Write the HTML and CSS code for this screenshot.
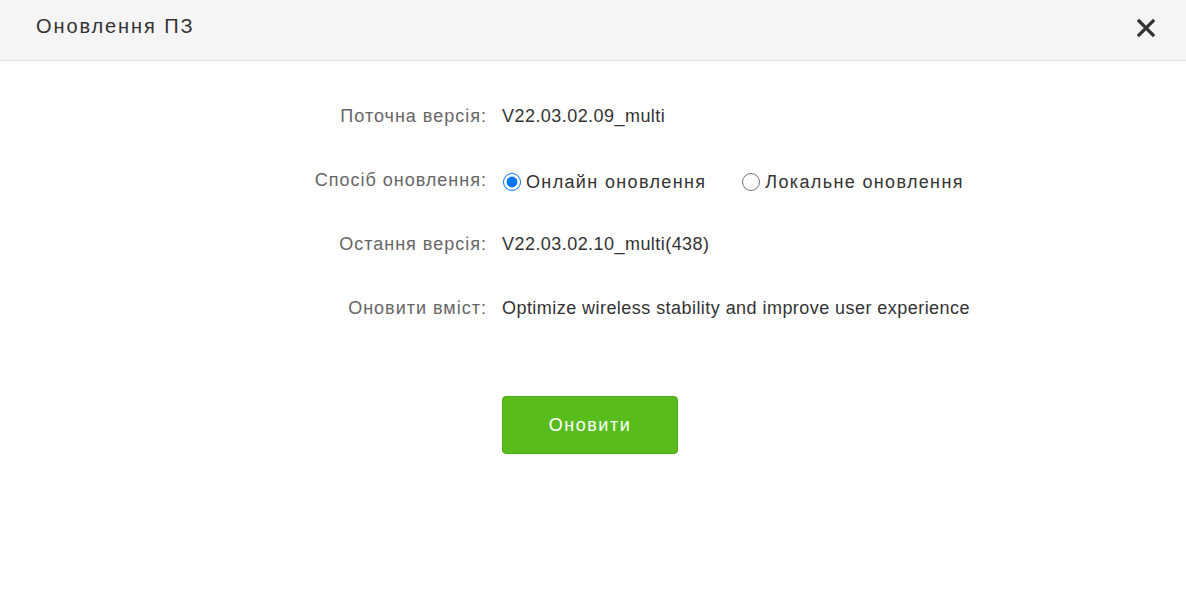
FILE: index.html
```html
<!DOCTYPE html>
<html lang="uk">
<head>
  <meta charset="UTF-8" />
  <title>Оновлення ПЗ</title>
  <link rel="stylesheet" href="styles.css">
</head>
<body>
  <div class="dialog-head">
    <h1>Оновлення ПЗ</h1>
    <button class="close" aria-label="close">
      <svg width="20" height="20" viewBox="0 0 20 20">
        <path d="M3 3 L17 17 M17 3 L3 17" stroke="#333" stroke-width="3.2" stroke-linecap="square" />
      </svg>
    </button>
  </div>

  <div class="form">
    <div class="row">
      <div class="label">Поточна версія:</div>
      <div class="value">V22.03.02.09_multi</div>
    </div>

    <div class="row">
      <div class="label">Спосіб оновлення:</div>
      <div class="value radios">
        <label><input type="radio" name="mode" checked> Онлайн оновлення</label>
        <label><input type="radio" name="mode"> Локальне оновлення</label>
      </div>
    </div>

    <div class="row">
      <div class="label">Остання версія:</div>
      <div class="value">V22.03.02.10_multi(438)</div>
    </div>

    <div class="row">
      <div class="label">Оновити вміст:</div>
      <div class="value">Optimize wireless stability and improve user experience</div>
    </div>

    <div class="actions">
      <button class="btn-update">Оновити</button>
    </div>
  </div>
</body>
</html>
```

FILE: styles.css
```css
body {
  margin: 0;
  font-family: "Liberation Sans", Arial, sans-serif;
  background: #fff;
  color: #333;
}

.dialog-head {
  height: 60px;
  background: #f5f5f5;
  border-bottom: 1px solid #e4e4e4;
  display: flex;
  align-items: center;
  justify-content: space-between;
  padding: 0 30px 0 36px;
}

.dialog-head h1 {
  margin: 0;
  margin-top: -8px;
  font-size: 20px;
  font-weight: normal;
  letter-spacing: 1.9px;
  color: #333;
}

.close {
  border: none;
  background: none;
  padding: 0;
  margin-top: -4px;
  display: flex;
}

.form {
  padding: 23px 0 0 0;
  font-size: 18px;
}

.row {
  display: grid;
  grid-template-columns: 486px 1fr;
  column-gap: 16px;
  height: 64px;
  align-items: center;
}

.label {
  text-align: right;
  color: #666;
  letter-spacing: 1px;
  margin-right: -1px;
}

.value {
  color: #333;
  letter-spacing: 0.45px;
}

.radios {
  display: flex;
  gap: 35px;
  margin-top: 4px;
  letter-spacing: 1.35px;
}

.radios label {
  display: flex;
  align-items: center;
  gap: 5px;
}

.radios input {
  width: 18px;
  height: 18px;
  margin: 0 0 0 1px;
}

.actions {
  padding: 56px 0 0 502px;
}

.btn-update {
  width: 176px;
  height: 58px;
  background: #58bc1d;
  border: 1px solid #4eaa17;
  border-radius: 4px;
  color: #fff;
  font-family: "Liberation Sans", Arial, sans-serif;
  font-size: 18px;
  letter-spacing: 1.5px;
  cursor: pointer;
}
```
